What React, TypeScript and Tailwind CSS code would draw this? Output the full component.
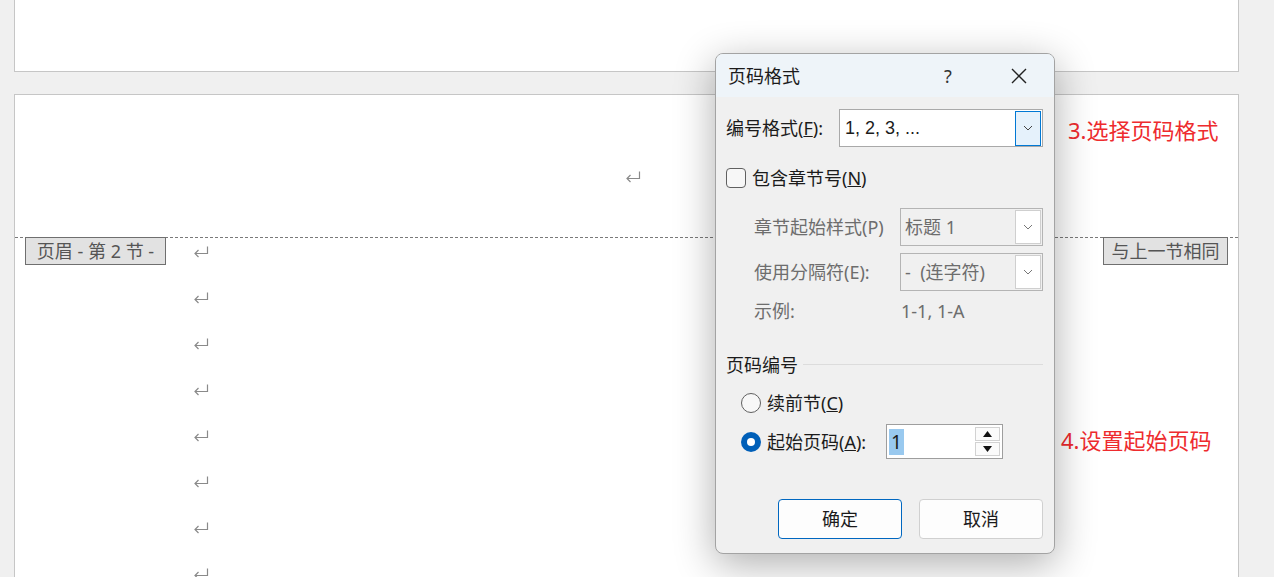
import React from 'react';

const FONT = { fontFamily: '"Noto Sans", "Noto Sans CJK SC", sans-serif' };

function ReturnMark() {
  return (
    <svg width="16" height="12" viewBox="0 0 16 12" className="block">
      <path d="M14.5 0.5 V7.5 H2" fill="none" stroke="#8a8a8a" strokeWidth="1.2" />
      <path d="M5.5 4 L2 7.5 L5.5 11" fill="none" stroke="#8a8a8a" strokeWidth="1.2" />
    </svg>
  );
}

function Chevron({ color = '#555' }: { color?: string }) {
  return (
    <svg width="10" height="6" viewBox="0 0 10 6">
      <path d="M1 1 L5 5 L9 1" fill="none" stroke={color} strokeWidth="1" />
    </svg>
  );
}

function DisabledSelect({ value }: { value: string }) {
  return (
    <div className="flex-1 h-[38px] border border-[#b4b4b4] bg-[#f0f0f0] flex items-center pl-[4px] pr-[1px]">
      <span className="flex-1 text-[#6d6d6d] whitespace-pre">{value}</span>
      <div className="w-[26px] h-[34px] bg-white border border-[#cfcfcf] flex items-center justify-center">
        <Chevron color="#777" />
      </div>
    </div>
  );
}

function Dialog() {
  return (
    <div
      className="absolute left-[715px] top-[53px] w-[340px] h-[501px] rounded-[8px] border border-[#a3a3a3] bg-[#f0f0f0] shadow-[0_10px_40px_rgba(0,0,0,0.32)] overflow-hidden text-[18px] leading-none text-[#1b1b1b]"
      style={FONT}
    >
      <div className="h-[43px] bg-[#eef4f9] flex items-center pl-[12px]">
        <span className="flex-1">页码格式</span>
        <span className="w-[20px] text-center text-[#333] mr-[53px]">?</span>
        <svg width="16" height="16" viewBox="0 0 16 16" className="mr-[27px]">
          <path d="M1 1 L15 15 M15 1 L1 15" stroke="#222" strokeWidth="1.4" />
        </svg>
      </div>
      <div className="pl-[10px] pr-[11px] pt-[12px]">
        <div className="flex items-center h-[38px]">
          <span className="w-[113px]">
            编号格式(<span className="underline">F</span>):
          </span>
          <div className="flex-1 h-[38px] border border-[#a9a9a9] bg-white flex items-center pl-[5px] pr-[1px]">
            <span className="flex-1 text-[18px] font-['Liberation_Sans',sans-serif]">1, 2, 3, ...</span>
            <div className="w-[26px] h-[35px] bg-[#e5f1fb] border border-[#0078d4] flex items-center justify-center">
              <Chevron color="#444" />
            </div>
          </div>
        </div>

        <div className="flex items-center h-[20px] mt-[21px]">
          <div className="w-[20px] h-[20px] rounded-[4px] border border-[#606060] bg-[#f7f7f7]" />
          <span className="ml-[6px]">
            包含章节号(<span className="underline">N</span>)
          </span>
        </div>

        <div className="flex items-center h-[38px] mt-[20px] pl-[28px]">
          <span className="w-[146px] text-[#6d6d6d]">章节起始样式(P)</span>
          <DisabledSelect value="标题 1" />
        </div>
        <div className="flex items-center h-[38px] mt-[7px] pl-[28px]">
          <span className="w-[146px] text-[#6d6d6d]">使用分隔符(E):</span>
          <DisabledSelect value="-  (连字符)" />
        </div>
        <div className="flex items-center h-[20px] mt-[10px] pl-[28px] text-[#6d6d6d]">
          <span className="w-[147px]">示例:</span>
          <span>1-1, 1-A</span>
        </div>

        <div className="flex items-center h-[20px] mt-[34px]">
          <span>页码编号</span>
          <div className="flex-1 h-px bg-[#dcdcdc] ml-[5px] mt-[-2px]" />
        </div>

        <div className="flex items-center h-[20px] mt-[18px] pl-[15px]">
          <div className="w-[20px] h-[20px] rounded-full border border-[#606060] bg-[#f7f7f7]" />
          <span className="ml-[6px]">
            续前节(<span className="underline">C</span>)
          </span>
        </div>

        <div className="flex items-center h-[35px] mt-[11px] pl-[15px]">
          <div className="w-[20px] h-[20px] rounded-full bg-[#005fb8] flex items-center justify-center">
            <div className="w-[8px] h-[8px] rounded-full bg-white" />
          </div>
          <span className="ml-[6px] w-[119px]">
            起始页码(<span className="underline">A</span>):
          </span>
          <div className="w-[117px] h-[35px] border border-[#9e9e9e] bg-white flex items-center pl-[2px] pr-[2px]">
            <div className="flex-1 flex items-center">
              <span className="bg-[#99c9ef] px-[2px] leading-[26px] text-[19px]">1</span>
            </div>
            <div className="flex flex-col gap-[1px]">
              <div className="w-[25px] h-[14px] border border-[#d2d2d2] bg-[#fbfbfb] flex items-center justify-center">
                <svg width="9" height="6" viewBox="0 0 9 6"><path d="M0 6 L4.5 0 L9 6 Z" fill="#111" /></svg>
              </div>
              <div className="w-[25px] h-[14px] border border-[#d2d2d2] bg-[#fbfbfb] flex items-center justify-center">
                <svg width="9" height="6" viewBox="0 0 9 6"><path d="M0 0 L4.5 6 L9 0 Z" fill="#111" /></svg>
              </div>
            </div>
          </div>
        </div>

        <div className="flex justify-end gap-[17px] mt-[40px]">
          <button className="w-[124px] h-[40px] rounded-[4px] border border-[#0067c0] bg-[#fdfdfd] text-[18px]">确定</button>
          <button className="w-[124px] h-[40px] rounded-[4px] border border-[#d0d0d0] bg-[#fdfdfd] text-[18px]">取消</button>
        </div>
      </div>
    </div>
  );
}

export default function App() {
  const rows = [0, 1, 2, 3, 4, 5, 6, 7];
  return (
    <div className="relative w-[1274px] h-[577px] bg-[#f0f0f0] overflow-hidden" style={FONT}>
      <div className="ml-[14px] w-[1225px] h-[72px] bg-white border-x border-b border-[#c6c6c6]" />
      <div className="relative ml-[14px] mt-[22px] w-[1225px] h-[500px] bg-white border-x border-t border-[#c6c6c6]">
        <div className="h-[142px] relative">
          <div className="absolute left-[610px] top-[76px]">
            <ReturnMark />
          </div>
        </div>
        <div className="border-t border-dashed border-[#7a7a7a]" />
        <div className="relative">
          <div className="absolute left-[10px] top-[-1px] w-[141px] h-[28px] flex items-center justify-center bg-[#e2e2e2] border border-[#6f6f6f] text-[18px] text-[#555] leading-none whitespace-pre">
            页眉 - 第 2 节 -
          </div>
          <div className="absolute right-[10px] top-[-1px] w-[125px] h-[28px] flex items-center justify-center bg-[#e2e2e2] border border-[#6f6f6f] text-[18px] text-[#555] leading-none">
            与上一节相同
          </div>
          {rows.map((r) => (
            <div key={r} className="h-[46px] pl-[178px] pt-[8px]">
              <ReturnMark />
            </div>
          ))}
        </div>
        <div className="absolute left-[1053px] top-[24px] text-[22px] leading-none text-[#ee2b2e]">3.选择页码格式</div>
        <div className="absolute left-[1046px] top-[334px] text-[22px] leading-none text-[#ee2b2e]">4.设置起始页码</div>
      </div>
      <Dialog />
    </div>
  );
}
